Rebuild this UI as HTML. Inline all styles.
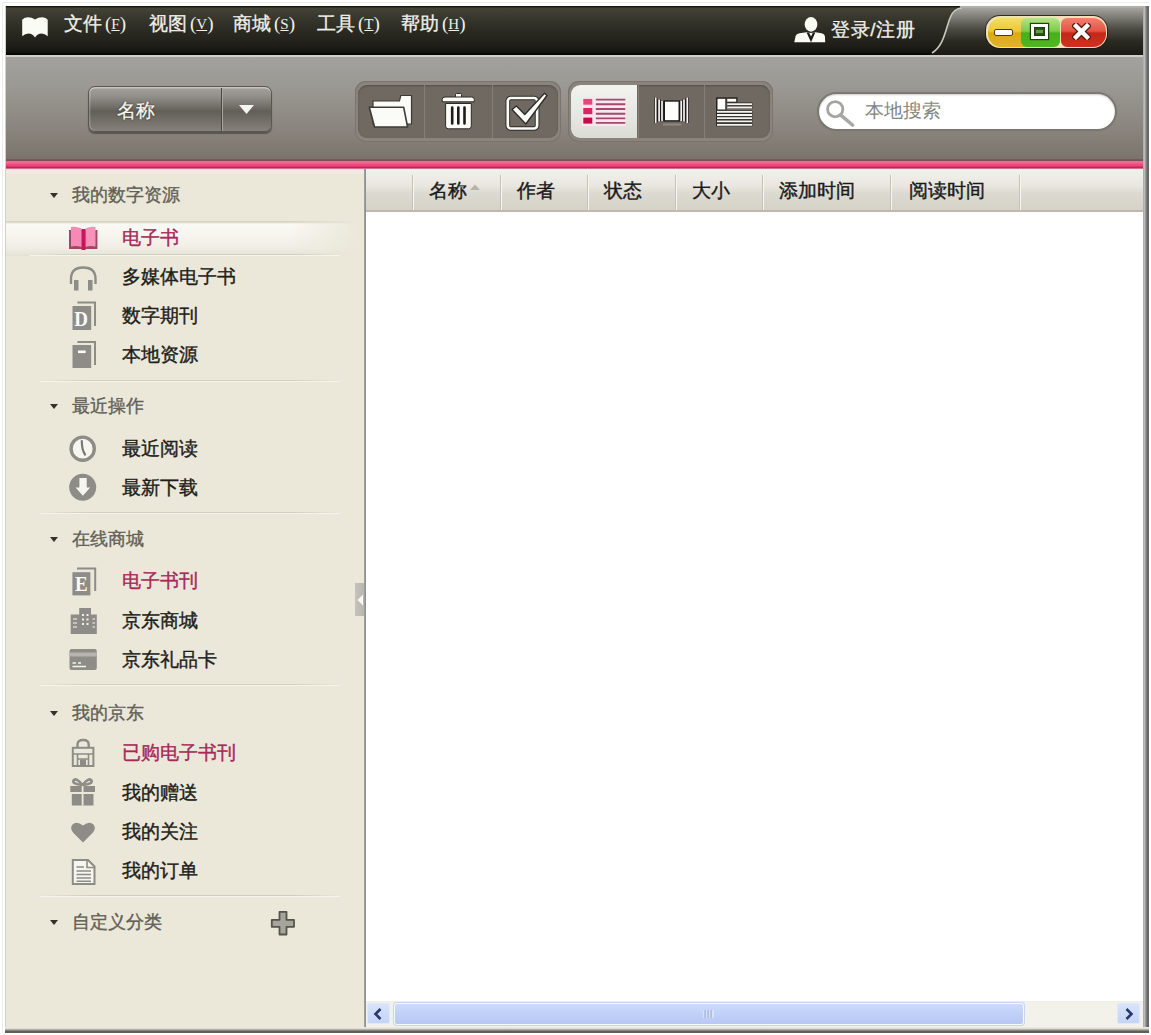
<!DOCTYPE html>
<html><head><meta charset="utf-8">
<style>
*{margin:0;padding:0;box-sizing:border-box}
html,body{width:1151px;height:1035px;overflow:hidden;background:#fff;font-family:"Liberation Sans",sans-serif}
.a{position:absolute}
#outer{left:2px;top:2px;width:1147px;height:1031px;border:1px solid #ecece8;border-right:none;border-bottom:none}
#title{left:6px;top:6px;width:1137px;height:49px;background:linear-gradient(#1a1a10 0,#1a1a10 1px,#454437 2px,#3a392f 10px,#2e2d24 22px,#1e1d17 40px,#141410 46px,#000 49px)}
#tline{left:6px;top:55px;width:1137px;height:2px;background:#cfcfca}
#tool{left:6px;top:57px;width:1137px;height:103px;background:linear-gradient(#a3a29e,#9a9893 30%,#8c8780 65%,#7b736b)}
#pink{left:6px;top:159px;width:1137px;height:10px;background:linear-gradient(#6e605a 0,#7a5056 1.5px,#e07494 2.5px,#ec6a92 3.5px,#f25a88 4.5px,#f04a7c 5.5px,#ee467a 6.5px,#d8366a 7.5px,#c0285a 8.5px,#d07090 9.5px,#e8a8b8 10px)}
#pinkf{left:6px;top:169px;width:358px;height:5px;background:linear-gradient(#fad8e0 0,#ffe2e6 1.5px,#f2ebe0 3.5px,rgba(236,232,218,0) 5px)}
#side{left:6px;top:169px;width:359px;height:860px;background:#ebe8da}
#sideb{left:5px;top:1027px;width:1144px;height:6px;background:linear-gradient(#f0eee4 0,#e0ddd2 25%,#8e8c84 55%,#54524c 80%,#6a6a66 100%)}
#vline{left:364px;top:169px;width:2px;height:860px;background:linear-gradient(90deg,#a4a8a8,#868a8c)}
#content{left:366px;top:169px;width:777px;height:858px;background:#fff}
#rb{left:1143px;top:6px;width:6px;height:1027px;background:linear-gradient(90deg,#9f9fa1,#c5c5c9 20%,#8a8a8a 50%,#686868 70%,#666)}
#hdr{left:366px;top:169px;width:777px;height:43px;background:linear-gradient(#f2f1ec,#e9e7e0 40%,#dcd9d0 60%,#d6d2c8);border-bottom:2px solid #bdb9af}
.sep{top:175px;width:2px;height:35px;background:linear-gradient(90deg,#c6c2b8 50%,#f8f6f2 50%)}
.ht{top:179px;font-size:19px;color:#1a1a1a;line-height:24px;white-space:nowrap;-webkit-text-stroke:0.4px #1a1a1a}
.menu{top:12px;font-size:19px;color:#f0f0ea;line-height:24px;white-space:nowrap;-webkit-text-stroke:0.3px #f0f0ea}
.menu u{font-family:"Liberation Serif",serif;font-size:15px;text-decoration:underline}
</style></head><body>
<div id="outer" class="a"></div>
<div class="a" style="left:5px;top:6px;width:1px;height:1026px;background:#d0d0c8"></div>
<div id="title" class="a"></div>
<div id="tline" class="a"></div>
<div id="tool" class="a"></div>
<div id="side" class="a"></div>
<div id="content" class="a"></div>
<div id="vline" class="a"></div>
<div id="hdr" class="a"></div>
<div id="pink" class="a"></div>
<div id="pinkf" class="a"></div>
<div id="rb" class="a"></div>
<div id="sideb" class="a"></div>

<!-- header separators -->
<div class="a sep" style="left:412px"></div>
<div class="a sep" style="left:500px"></div>
<div class="a sep" style="left:587px"></div>
<div class="a sep" style="left:675px"></div>
<div class="a sep" style="left:762px"></div>
<div class="a sep" style="left:890px"></div>
<div class="a sep" style="left:1019px"></div>
<div class="a ht" style="left:429px">名称</div>
<div class="a ht" style="left:517px">作者</div>
<div class="a ht" style="left:604px">状态</div>
<div class="a ht" style="left:692px">大小</div>
<div class="a ht" style="left:779px">添加时间</div>
<div class="a ht" style="left:909px">阅读时间</div>

<!-- menu -->
<div class="a menu" style="left:64px">文件<span style="font-family:'Liberation Serif',serif;font-size:19px;margin-left:3px;-webkit-text-stroke:0">(<u style="font-size:15px;position:relative;top:-1px">F</u>)</span></div>
<div class="a menu" style="left:149px">视图<span style="font-family:'Liberation Serif',serif;font-size:19px;margin-left:3px;-webkit-text-stroke:0">(<u style="font-size:15px;position:relative;top:-1px">V</u>)</span></div>
<div class="a menu" style="left:233px">商城<span style="font-family:'Liberation Serif',serif;font-size:19px;margin-left:3px;-webkit-text-stroke:0">(<u style="font-size:15px;position:relative;top:-1px">S</u>)</span></div>
<div class="a menu" style="left:317px">工具<span style="font-family:'Liberation Serif',serif;font-size:19px;margin-left:3px;-webkit-text-stroke:0">(<u style="font-size:15px;position:relative;top:-1px">T</u>)</span></div>
<div class="a menu" style="left:401px">帮助<span style="font-family:'Liberation Serif',serif;font-size:19px;margin-left:3px;-webkit-text-stroke:0">(<u style="font-size:15px;position:relative;top:-1px">H</u>)</span></div>


<!-- book icon -->
<svg class="a" style="left:16px;top:10px" width="40" height="34" viewBox="0 0 40 34">
<path d="M6.2 9.8 Q8 7.3 11.5 7.3 Q16 7.3 19 9.6 Q22 7.3 26.5 7.3 Q30 7.3 31.7 9.8 L31.7 26.2 Q29 23.4 25.5 23.4 Q21.5 23.6 19 27.4 Q16.5 23.6 12.5 23.4 Q9 23.4 6.2 26.2 Z" fill="#fbfbf6"/>
</svg>
<!-- right tab -->
<svg class="a" style="left:926px;top:6px" width="217" height="49" viewBox="0 0 217 49">
<defs><linearGradient id="tabg" x1="0" y1="0" x2="0" y2="1">
<stop offset="0" stop-color="#a8a8a3"/><stop offset="0.15" stop-color="#8a8983"/><stop offset="0.45" stop-color="#4e4d44"/><stop offset="0.7" stop-color="#2c2b23"/><stop offset="1" stop-color="#1a1914"/></linearGradient></defs>
<path d="M6 48 C18 40 20 22 24 12 C26 6 30 2 36 1 L217 1 L217 49 L0 49 Z" fill="url(#tabg)"/>
<path d="M6 47 C18 40 20 22 24 12 C26 6 30 2.5 36 2" fill="none" stroke="#c8c8c2" stroke-width="1.6"/>
<rect x="34" y="0" width="183" height="2" fill="#b0afaa"/>
</svg>
<!-- window buttons -->
<div class="a" style="left:985px;top:15px;width:123px;height:34px;border-radius:15px;background:#1a1810;opacity:.8"></div>
<div class="a" style="left:986px;top:16px;width:121px;height:32px;border-radius:14px;overflow:hidden;background:#efe2b8">
 <div class="a" style="left:1.5px;top:1.5px;width:40px;height:29px;border-radius:13px 0 0 13px;background:linear-gradient(#f4dc6a,#ecc838 45%,#dca818 52%,#e2b424)"></div>
 <div class="a" style="left:35px;top:1.5px;width:38.5px;height:29px;border-radius:6px;background:linear-gradient(#b4e488,#7ccc48 45%,#48b018 52%,#4cb820)"></div>
 <div class="a" style="left:74.5px;top:1.5px;width:45px;height:29px;border-radius:6px 13px 13px 6px;background:linear-gradient(#f28070,#e45444 45%,#c42818 52%,#d03020)"></div>
</div>
<div class="a" style="left:994px;top:29px;width:19px;height:7px;background:#fff;border:1.5px solid #4a3a10;border-radius:2px"></div>
<div class="a" style="left:1031px;top:24px;width:17px;height:15px;border:3px solid #fff;box-shadow:0 0 0 1.2px #204010,inset 0 0 0 1.2px #204010;background:#2e5a18"></div><div class="a" style="left:1036px;top:30px;width:7px;height:3px;background:#60a040"></div>
<svg class="a" style="left:1072px;top:23px" width="19" height="17" viewBox="0 0 19 17"><path d="M4 3 L15 14 M15 3 L4 14" stroke="#5a1a10" stroke-width="7" stroke-linecap="square"/><path d="M4 3 L15 14 M15 3 L4 14" stroke="#fff" stroke-width="4.4" stroke-linecap="square"/></svg>
<!-- login -->
<svg class="a" style="left:794px;top:16px" width="32" height="28" viewBox="0 0 32 28">
<ellipse cx="17" cy="8.4" rx="6.3" ry="7.3" fill="#fbfbf6"/>
<path d="M0.3 26.3 L1.6 20 Q2.2 17.8 5.5 17.2 L12.5 16.3 Q17 17 21.5 16.3 L27.5 17.2 Q30.5 17.8 30.9 20 L31.2 26.3 Z" fill="#fbfbf6"/>
<path d="M12.6 16.6 L21.3 16.6 L17 26.3 Z" fill="#1c1b16"/>
<path d="M15.2 17 L18.7 17 L17 20.5 Z" fill="#fbfbf6"/>
</svg>
<div class="a menu" style="left:831px;top:18px;letter-spacing:0.6px">登录/注册</div>

<!-- toolbar: dropdown -->
<div class="a" style="left:88px;top:86px;width:184px;height:46px;border-radius:7px;background:linear-gradient(#a3a19d 0,#94918c 20%,#6e6a64 48%,#625e58 55%,#7a766f 85%,#86827b 100%);border:1px solid #5a5650;box-shadow:inset 0 1.5px 0 rgba(230,228,224,.55),inset 1.5px 0 0 rgba(230,228,224,.25),0 1.5px 1px rgba(60,56,50,.6)"></div>
<div class="a" style="left:221px;top:88px;width:1px;height:43px;background:#4a4640"></div>
<div class="a" style="left:222px;top:88px;width:1px;height:43px;background:#aaa7a2"></div>
<div class="a" style="left:117px;top:99px;font-size:19px;line-height:24px;color:#f8f8f4;-webkit-text-stroke:0.3px #f8f8f4;text-shadow:0 0 2px #2a2620,0 0 1px #2a2620">名称</div>
<svg class="a" style="left:238px;top:104px" width="17" height="11" viewBox="0 0 17 11"><path d="M1 1 L16 1 L8.5 10 Z" fill="#f4f4f0"/></svg>
<!-- group 1 -->
<div class="a" style="left:355px;top:81px;width:206px;height:61px;border-radius:11px;background:#8a847c;box-shadow:inset 0 0 0 1px #7a746c"></div>
<div class="a" style="left:358px;top:85px;width:200px;height:53px;border-radius:9px;background:#6f6962;box-shadow:inset 0 1px 2px rgba(0,0,0,.25)"></div>
<div class="a" style="left:424px;top:85px;width:1px;height:53px;background:#867f77"></div>
<div class="a" style="left:492px;top:85px;width:1px;height:53px;background:#867f77"></div>
<!-- group 2 -->
<div class="a" style="left:568px;top:81px;width:205px;height:61px;border-radius:11px;background:#8a847c;box-shadow:inset 0 0 0 1px #7a746c"></div>
<div class="a" style="left:571px;top:85px;width:199px;height:53px;border-radius:9px;background:#6f6962;box-shadow:inset 0 1px 2px rgba(0,0,0,.25)"></div>
<div class="a" style="left:571px;top:85px;width:66px;height:53px;border-radius:9px 0 0 9px;background:linear-gradient(#f2f2ee,#e6e6e2 60%,#dcdcd6)"></div>
<div class="a" style="left:638px;top:85px;width:1px;height:53px;background:#867f77"></div>
<div class="a" style="left:704px;top:85px;width:1px;height:53px;background:#867f77"></div>
<!-- search -->
<div class="a" style="left:819px;top:94px;width:296px;height:35px;border-radius:18px;background:#fff;box-shadow:0 0 0 1.5px #7a7670,0 0 1px 2px rgba(90,86,80,.35),inset 0 1px 2px rgba(0,0,0,.2)"></div>
<svg class="a" style="left:823px;top:97px" width="36" height="32" viewBox="0 0 36 32">
<circle cx="12.2" cy="12.2" r="7.6" fill="none" stroke="#a4a4a0" stroke-width="2.8"/>
<path d="M17.5 17.8 L29.5 28" stroke="#a8a8a4" stroke-width="3.6" stroke-linecap="round"/>
</svg>
<div class="a" style="left:865px;top:99px;font-size:19px;line-height:24px;color:#858580">本地搜索</div>

<!-- toolbar icons -->
<svg class="a" style="left:362px;top:88px" width="60" height="46" viewBox="0 0 60 46">
<path d="M11 13 L37.5 13 L38.8 7.5 L49.5 7.5 L49.5 36 L44 36 L11 36 Z" fill="#fbfbf7" stroke="#3e3a34" stroke-width="1.2"/>
<path d="M7.3 19.3 L41.7 19.3 L45.6 39 L12.5 39 Z" fill="#fbfbf7" stroke="#3e3a34" stroke-width="1.6" stroke-linejoin="round"/>
</svg>
<svg class="a" style="left:432px;top:88px" width="52" height="46" viewBox="0 0 52 46">
<path d="M23.5 9.5 L23.5 6.5 Q23.5 5.5 24.5 5.5 L28.5 5.5 Q29.5 5.5 29.5 6.5 L29.5 9.5 Z" fill="#fbfbf7" stroke="#2e2a26" stroke-width="1"/>
<path d="M10.2 13.8 L10.2 11.5 Q10.2 9 13 9 L39.5 9 Q42.3 9 42.3 11.5 L42.3 13.8 Z" fill="#fbfbf7" stroke="#2e2a26" stroke-width="1"/>
<path d="M13.6 15.5 L39.3 15.5 L39.3 38 Q39.3 40.8 36.5 40.8 L16.4 40.8 Q13.6 40.8 13.6 38 Z" fill="#fbfbf7" stroke="#2e2a26" stroke-width="1"/>
<path d="M20.2 19.5 L20.2 35.5 M26.3 19.5 L26.3 35.5 M32.5 19.5 L32.5 35.5" stroke="#1e1c1a" stroke-width="2.6" stroke-linecap="round"/>
</svg>
<svg class="a" style="left:498px;top:86px" width="56" height="50" viewBox="0 0 56 50">
<rect x="9.8" y="12" width="29.3" height="30.5" rx="3" fill="none" stroke="#2e2a26" stroke-width="4.6"/>
<rect x="9.8" y="12" width="29.3" height="30.5" rx="3" fill="none" stroke="#fbfbf7" stroke-width="2.7"/>
<path d="M14 23.5 L18.5 20 L26.8 28.5 L46.5 7.3 L49 9.5 L27.8 38 Z" fill="#fbfbf7" stroke="#2e2a26" stroke-width="1.3" stroke-linejoin="round"/>
</svg>
<svg class="a" style="left:576px;top:90px" width="60" height="44" viewBox="0 0 60 44">
<rect x="6" y="7" width="44" height="29" fill="#fbe6ef"/>
<rect x="7.3" y="8.9" width="9" height="5.8" fill="#e8457a"/>
<rect x="7.3" y="18" width="9" height="6.2" fill="#de2262"/>
<rect x="7.3" y="27.6" width="9" height="6" fill="#c80a4a"/>
<path d="M19.8 9.6 H49.3 M19.8 14.3 H49.3 M19.8 19 H49.3 M19.8 23.7 H49.3 M19.8 28.4 H49.3 M19.8 32.9 H49.3" stroke="#a24a6c" stroke-width="1.9"/>
</svg>
<svg class="a" style="left:644px;top:90px" width="56" height="44" viewBox="0 0 56 44">
<rect x="19.5" y="10.3" width="16.5" height="21.3" fill="#1e1c1a"/>
<rect x="21" y="11.7" width="13.5" height="18.5" fill="#fdfdfb"/>
<path d="M11.7 7.5 V33 M15.1 9.5 V31.5 M18 11 V31 M37.2 11 V31 M40 9.5 V31.5 M43.3 7.5 V33" stroke="#1e1c1a" stroke-width="3.4"/>
<path d="M11.7 7.5 V33 M15.1 9.5 V31.5 M18 11 V31 M37.2 11 V31 M40 9.5 V31.5 M43.3 7.5 V33" stroke="#f4f4f0" stroke-width="1.7"/>
<path d="M19 34.5 H37" stroke="#8e8880" stroke-width="2"/>
</svg>
<svg class="a" style="left:708px;top:90px" width="56" height="44" viewBox="0 0 56 44">
<rect x="8" y="7.3" width="10.5" height="13" fill="#26231f"/>
<rect x="18.5" y="7.3" width="11" height="5.4" fill="#26231f"/>
<path d="M19.2 14.1 H44.3 M19.2 17.5 H44.3 M8 21.9 H44.3 M8 25 H44.3 M8 28.2 H44.3 M8 31.4 H44.3 M8 34.8 H44.3" stroke="#2a2723" stroke-width="3"/>
<rect x="9.5" y="8.8" width="7.8" height="10.7" fill="#fdfdfb"/>
<rect x="19.2" y="8.8" width="9" height="2.9" fill="#fdfdfb"/>
<path d="M19.2 14.1 H44 M19.2 17.5 H44 M9 21.9 H44 M9 25 H44 M9 28.2 H44 M9 31.4 H44 M9 34.8 H44" stroke="#f4f4f0" stroke-width="1.8"/>
</svg>

<!-- sidebar -->
<style>
.sh{font-size:18px;line-height:24px;color:#625f57;white-space:nowrap;-webkit-text-stroke:0.35px #625f57}
.si{font-size:19px;line-height:24px;color:#1e1e1a;white-space:nowrap;left:122px;-webkit-text-stroke:0.4px currentColor}
.pk{color:#a8285a}
.tri{width:0;height:0;border-left:4.5px solid transparent;border-right:4.5px solid transparent;border-top:5.5px solid #34322c;left:50px}
.hr{left:40px;width:300px;height:2px;background:linear-gradient(90deg,rgba(205,201,188,0),#d2cfc2 15%,#d2cfc2 85%,rgba(205,201,188,0));border-bottom:1px solid #f6f4ec}
</style>
<div class="a" style="left:6px;top:221px;width:352px;height:35px;background:linear-gradient(#d6d3c6 0,#d6d3c6 1px,#faf9f4 3px,#f6f5ee 40%,#efede3 80%,#e4e1d4 100%)"></div>
<div class="a" style="left:290px;top:221px;width:68px;height:35px;background:linear-gradient(90deg,rgba(235,232,218,0),#ebe8da)"></div>
<div class="a hr" style="top:254px;left:30px;width:310px"></div>
<div class="a tri" style="top:193px"></div><div class="a sh" style="left:72px;top:183px">我的数字资源</div>
<div class="a si pk" style="top:226px">电子书</div>
<div class="a si" style="top:265px">多媒体电子书</div>
<div class="a si" style="top:304px">数字期刊</div>
<div class="a si" style="top:343px">本地资源</div>
<div class="a hr" style="top:380px"></div>
<div class="a tri" style="top:404px"></div><div class="a sh" style="left:72px;top:394px">最近操作</div>
<div class="a si" style="top:437px">最近阅读</div>
<div class="a si" style="top:476px">最新下载</div>
<div class="a hr" style="top:512px"></div>
<div class="a tri" style="top:537px"></div><div class="a sh" style="left:72px;top:527px">在线商城</div>
<div class="a si pk" style="top:569px">电子书刊</div>
<div class="a si" style="top:609px">京东商城</div>
<div class="a si" style="top:648px">京东礼品卡</div>
<div class="a hr" style="top:684px"></div>
<div class="a tri" style="top:711px"></div><div class="a sh" style="left:72px;top:701px">我的京东</div>
<div class="a si pk" style="top:741px">已购电子书刊</div>
<div class="a si" style="top:781px">我的赠送</div>
<div class="a si" style="top:820px">我的关注</div>
<div class="a si" style="top:859px">我的订单</div>
<div class="a hr" style="top:895px"></div>
<div class="a tri" style="top:920px"></div><div class="a sh" style="left:72px;top:910px">自定义分类</div>
<svg class="a" style="left:268px;top:909px" width="28" height="27" viewBox="0 0 28 27">
<path d="M11.5 2.8 H18.5 V10.8 H26 V17.8 H18.5 V25.5 H11.5 V17.8 H3.8 V10.8 H11.5 Z" fill="#a6a49c" stroke="#57534a" stroke-width="1.8" stroke-linejoin="round"/>
</svg>
<!-- collapse handle -->
<div class="a" style="left:355px;top:583px;width:9px;height:33px;background:linear-gradient(90deg,#c4c2ba,#b8b6b0)"></div>
<svg class="a" style="left:356px;top:592px" width="8" height="16" viewBox="0 0 8 16"><path d="M7 2.5 L1.5 8 L7 13.5 Z" fill="#f8f8f4"/></svg>

<!-- sidebar icons -->
<svg class="a" style="left:62px;top:222px" width="42" height="36" viewBox="0 0 42 36">
<path d="M7 8 L7 27 L19.7 27 L19.7 28 L23.4 28 L23.4 27 L35.4 27 L35.4 8 Z" fill="#9e4868"/>
<path d="M9 5 Q14 4 19.7 6.5 L19.7 25 Q14 23.5 9 24.5 Z" fill="#f68ab4"/>
<path d="M33.5 5 Q28 4 23.4 6.5 L23.4 25 Q28 23.5 33.5 24.5 Z" fill="#f892ba"/>
<rect x="19.7" y="7" width="3.7" height="21" fill="#c4185a"/>
</svg>
<svg class="a" style="left:62px;top:258px" width="42" height="36" viewBox="0 0 42 36">
<path d="M9 26 L9 21 Q9 9.5 21.2 9.5 Q33.5 9.5 33.5 21 L33.5 26" fill="none" stroke="#8e8c86" stroke-width="2.4"/>
<rect x="12" y="22" width="4.5" height="10.5" fill="#8e8c86"/>
<rect x="26" y="22" width="4.5" height="10.5" fill="#8e8c86"/>
</svg>
<svg class="a" style="left:62px;top:298px" width="42" height="36" viewBox="0 0 42 36">
<path d="M15.4 4.5 H33 V28" fill="none" stroke="#8e8c86" stroke-width="2"/>
<rect x="10.5" y="8" width="18.7" height="24" fill="#8e8c86"/>
<text x="19.2" y="27.8" font-family="Liberation Serif" font-weight="bold" font-size="19" fill="#fafaf6" text-anchor="middle" transform="translate(19.2 27.8) scale(1 1.12) translate(-19.2 -27.8)">D</text>
</svg>
<svg class="a" style="left:62px;top:337px" width="42" height="36" viewBox="0 0 42 36">
<path d="M15.4 5 H33 V28" fill="none" stroke="#8e8c86" stroke-width="2"/>
<rect x="10.5" y="8" width="18.7" height="23" fill="#8e8c86"/>
<rect x="16" y="13.5" width="7.7" height="2.6" fill="#fafaf6"/>
</svg>
<svg class="a" style="left:62px;top:428px" width="42" height="42" viewBox="0 0 42 42">
<circle cx="20.7" cy="20.7" r="11.6" fill="#f6f5ef" stroke="#8e8c86" stroke-width="3.4"/>
<path d="M19.8 13 Q19.8 22 23 26.5" fill="none" stroke="#7a7872" stroke-width="2.2" stroke-linecap="round"/>
</svg>
<svg class="a" style="left:62px;top:466px" width="42" height="42" viewBox="0 0 42 42">
<circle cx="20.7" cy="21.2" r="13.5" fill="#8e8c86"/>
<path d="M17.4 12 H24.7 V21.5 H28.2 L20.9 29.8 L13.6 21.5 H17.4 Z" fill="#f6f5ef"/>
</svg>
<svg class="a" style="left:62px;top:560px" width="42" height="42" viewBox="0 0 42 42">
<path d="M15 8.5 H33.2 V31" fill="none" stroke="#8e8c86" stroke-width="2"/>
<rect x="10.4" y="12.2" width="18" height="23.2" fill="#8e8c86"/>
<text x="19.4" y="31.2" font-family="Liberation Serif" font-weight="bold" font-size="19" fill="#fafaf6" text-anchor="middle" transform="translate(19.4 31.2) scale(1 1.12) translate(-19.4 -31.2)">E</text>
</svg>
<svg class="a" style="left:62px;top:602px" width="42" height="36" viewBox="0 0 42 36">
<rect x="17.2" y="6" width="11.8" height="26" fill="#8e8c86"/>
<rect x="8.7" y="12.5" width="26.1" height="19.5" fill="#8e8c86"/>
<path d="M11 17 H15 M11 21 H15 M11 25 H15 M30.5 17 H33 M30.5 21 H33 M30.5 25 H33" stroke="#d6d4cc" stroke-width="1.6"/>
<path d="M20 13 H22 M24.5 13 H26.5 M20 17.5 H22 M24.5 17.5 H26.5 M20 22 H22 M24.5 22 H26.5" stroke="#f0efe8" stroke-width="2.2"/>
</svg>
<svg class="a" style="left:62px;top:641px" width="42" height="36" viewBox="0 0 42 36">
<rect x="7.5" y="8" width="27.3" height="21" rx="2" fill="#8e8c86"/>
<rect x="7.5" y="11.5" width="27.3" height="4" fill="#b6b4ac"/>
<path d="M10.5 22 H14 M16 22 H19 M10.5 25.5 H24" stroke="#f4f3ee" stroke-width="1.6"/>
</svg>
<svg class="a" style="left:62px;top:734px" width="42" height="36" viewBox="0 0 42 36">
<path d="M15.5 13 V10.5 Q15.5 6 21.1 6 Q26.7 6 26.7 10.5 V13" fill="none" stroke="#8e8c86" stroke-width="2.4"/>
<rect x="10.8" y="13.8" width="20.6" height="18.2" fill="none" stroke="#8e8c86" stroke-width="2"/>
<path d="M11 20 H31 M15.5 20 V31 M26.5 20 V31 M15.5 25 H26.5" stroke="#8e8c86" stroke-width="1.6"/>
<rect x="18" y="25.5" width="6" height="6" fill="#8e8c86"/>
</svg>
<svg class="a" style="left:62px;top:774px" width="42" height="36" viewBox="0 0 42 36">
<path d="M20.5 11 Q14 3 11.5 6.5 Q10 10 20.5 11 Q31 10 29.5 6.5 Q27 3 20.5 11" fill="none" stroke="#8e8c86" stroke-width="2.6"/>
<rect x="8.3" y="12" width="24.7" height="6.5" fill="#8e8c86"/>
<rect x="9.8" y="20" width="21.7" height="11.5" fill="#8e8c86"/>
<path d="M20.6 12 V31.5 M8 18.8 H33" stroke="#ebe8da" stroke-width="1.8"/>
</svg>
<svg class="a" style="left:62px;top:818px" width="42" height="30" viewBox="0 0 42 30">
<path d="M21 24.5 L11.5 15 Q7.5 10.5 10.5 6.5 Q14.5 2.5 21 7.5 Q27.5 2.5 31.5 6.5 Q34.5 10.5 30.5 15 Z" fill="#8e8c86"/>
</svg>
<svg class="a" style="left:62px;top:854px" width="42" height="36" viewBox="0 0 42 36">
<path d="M10.8 6 H26 L32.5 12.5 V30 H10.8 Z" fill="#f6f5ef" stroke="#8e8c86" stroke-width="2"/>
<path d="M25 6 V13.5 H32.5" fill="none" stroke="#8e8c86" stroke-width="1.6"/>
<path d="M14.5 13 H22 M14.5 17 H29 M14.5 20.5 H29 M14.5 24 H29 M14.5 27.2 H29" stroke="#8e8c86" stroke-width="1.6"/>
</svg>
<!-- sort arrow -->
<svg class="a" style="left:469px;top:183px" width="12" height="8" viewBox="0 0 12 8"><path d="M1 7 L6 1.5 L11 7 Z" fill="#b4b2ac"/></svg>
<!-- scrollbar -->
<div class="a" style="left:366px;top:1001px;width:777px;height:26px;background:#f2f2ea;border-top:1px solid #eeeee8"></div>
<div class="a" style="left:367px;top:1003px;width:23px;height:21px;background:linear-gradient(#d8e4fc,#c4d4f6);border:1px solid #e0e8fb;border-radius:2px"></div>
<svg class="a" style="left:370px;top:1006px" width="16" height="16" viewBox="0 0 16 16"><path d="M10.5 3 L5.5 8 L10.5 13" fill="none" stroke="#28386a" stroke-width="2.6"/></svg>
<div class="a" style="left:394px;top:1003px;width:630px;height:22px;background:linear-gradient(#ccdafc,#c0d0f8 50%,#b8c8f4);border:1px solid #f4f8ff;border-radius:3px;box-shadow:0 0 0 1px #c8d4ec"></div>
<svg class="a" style="left:702px;top:1009px" width="12" height="10" viewBox="0 0 12 10"><path d="M2 1 V9 M5 1 V9 M8 1 V9 M11 1 V9" stroke="#eef2fc" stroke-width="1"/><path d="M3 1 V9 M6 1 V9 M9 1 V9" stroke="#9aaad8" stroke-width="1"/></svg>
<div class="a" style="left:1117px;top:1003px;width:23px;height:21px;background:linear-gradient(#d8e4fc,#c4d4f6);border:1px solid #e0e8fb;border-radius:2px"></div>
<svg class="a" style="left:1121px;top:1006px" width="16" height="16" viewBox="0 0 16 16"><path d="M5.5 3 L10.5 8 L5.5 13" fill="none" stroke="#28386a" stroke-width="2.6"/></svg>
</body></html>
